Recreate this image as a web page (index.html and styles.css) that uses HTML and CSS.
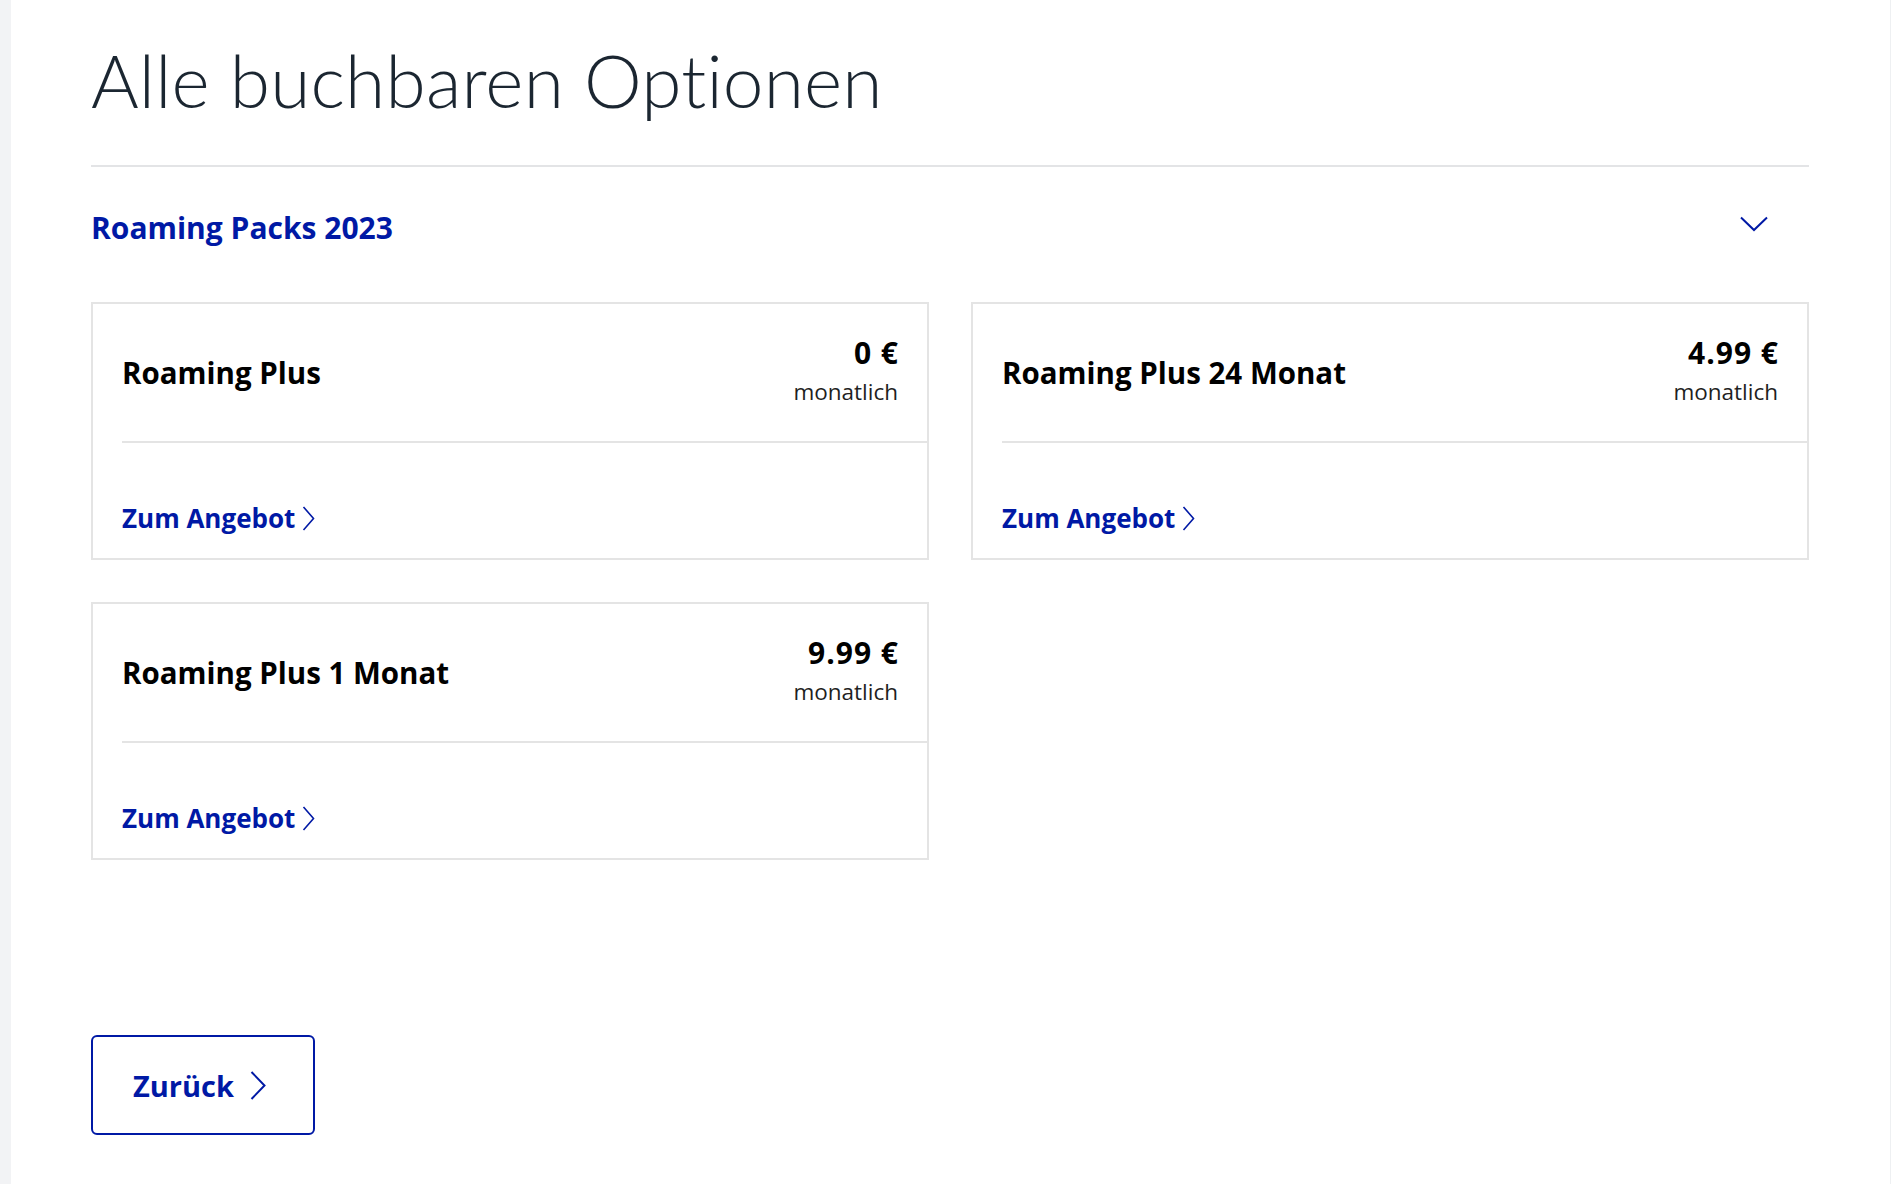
FILE: index.html
```html
<!DOCTYPE html>
<html lang="de">
<head>
<meta charset="utf-8">
<title>Alle buchbaren Optionen</title>
<link rel="stylesheet" href="styles.css">
</head>
<body>
<main class="page">
  <header class="page-head">
    <h1 class="page-title">Alle buchbaren Optionen</h1>
  </header>

  <section class="group">
    <div class="group-head">
      <h2 class="group-title">Roaming Packs 2023</h2>
      <svg class="group-toggle" width="28" height="16" viewBox="0 0 28 16" aria-hidden="true">
        <path d="M1 1.5 L14 14 L27 1.5" fill="none" stroke="#0019a5" stroke-width="2"/>
      </svg>
    </div>

    <div class="cards">
      <article class="card">
        <div class="card-head">
          <h3 class="card-name">Roaming Plus</h3>
          <div class="card-price">
            <div class="price">0 €</div>
            <div class="period">monatlich</div>
          </div>
        </div>
        <div class="card-foot">
          <a class="offer-link" href="#">Zum Angebot
            <svg class="link-chev" width="13" height="25" viewBox="0 0 13 25" aria-hidden="true"><path d="M1.5 1 L11.5 12.5 L1.5 24" fill="none" stroke="#0019a5" stroke-width="1.6"/></svg>
          </a>
        </div>
      </article>

      <article class="card">
        <div class="card-head">
          <h3 class="card-name">Roaming Plus 24 Monat</h3>
          <div class="card-price">
            <div class="price">4.99 €</div>
            <div class="period">monatlich</div>
          </div>
        </div>
        <div class="card-foot">
          <a class="offer-link" href="#">Zum Angebot
            <svg class="link-chev" width="13" height="25" viewBox="0 0 13 25" aria-hidden="true"><path d="M1.5 1 L11.5 12.5 L1.5 24" fill="none" stroke="#0019a5" stroke-width="1.6"/></svg>
          </a>
        </div>
      </article>

      <article class="card">
        <div class="card-head">
          <h3 class="card-name">Roaming Plus 1 Monat</h3>
          <div class="card-price">
            <div class="price">9.99 €</div>
            <div class="period">monatlich</div>
          </div>
        </div>
        <div class="card-foot">
          <a class="offer-link" href="#">Zum Angebot
            <svg class="link-chev" width="13" height="25" viewBox="0 0 13 25" aria-hidden="true"><path d="M1.5 1 L11.5 12.5 L1.5 24" fill="none" stroke="#0019a5" stroke-width="1.6"/></svg>
          </a>
        </div>
      </article>
    </div>
  </section>

  <button class="back-btn" type="button">
    <span>Zurück</span>
    <svg class="back-chev" width="16" height="29" viewBox="0 0 16 29" aria-hidden="true"><path d="M1.5 1 L14.5 14.5 L1.5 28" fill="none" stroke="#0019a5" stroke-width="2"/></svg>
  </button>
</main>
</body>
</html>
```
FILE: styles.css
```css
* { box-sizing: border-box; }

html, body {
  margin: 0;
  padding: 0;
}

body {
  background: #f2f3f5;
  font-family: "Open Sans", "Noto Sans", Lato, sans-serif;
  color: #000;
}

.page {
  margin-left: 11px;
  min-height: 1184px;
  background: #fff;
  border-right: 1px solid #eef0f2;
  padding: 0 81px 0 80px;
}

.page-head {
  padding-top: 44px;
  padding-bottom: 49px;
  border-bottom: 2px solid #e3e4e6;
}

.page-title {
  margin: 0;
  font-family: Lato, "Open Sans", sans-serif;
  font-variant-ligatures: none;
  font-size: 73px;
  line-height: 72px;
  font-weight: 300;
  color: #1b2631;
  letter-spacing: 0.2px;
}

.group-head {
  height: 122px;
  margin-bottom: 13px;
  display: flex;
  align-items: center;
  justify-content: space-between;
  padding-right: 41px;
}

.group-title {
  margin: 0;
  font-size: 30px;
  line-height: 36px;
  font-weight: 700;
  color: #0019a5;
}

.group-toggle {
  display: block;
  margin-bottom: 8px;
}

.cards {
  display: grid;
  grid-template-columns: 1fr 1fr;
  column-gap: 42px;
  row-gap: 42px;
}

.card {
  border: 2px solid #e4e4e4;
  height: 258px;
  background: #fff;
}

.card-head {
  margin-left: 29px;
  padding-right: 29px;
  height: 139px;
  border-bottom: 2px solid #e4e4e4;
  display: flex;
  justify-content: space-between;
  align-items: flex-start;
}

.card-name {
  margin: 0;
  align-self: center;
  font-size: 29.5px;
  line-height: 36px;
  font-weight: 700;
  color: #000;
}

.card-price {
  padding-top: 31px;
  text-align: right;
}

.price {
  font-size: 30px;
  line-height: 36px;
  font-weight: 700;
  letter-spacing: 1px;
  margin-right: -1px;
  color: #000;
}

.period {
  margin-top: 6px;
  font-size: 22.5px;
  line-height: 30px;
  font-weight: 400;
  color: #1f1f1f;
}

.card-foot {
  height: 115px;
  margin-left: 29px;
  padding-top: 59px;
}

.offer-link {
  display: inline-flex;
  align-items: center;
  gap: 7px;
  font-size: 26px;
  line-height: 32px;
  font-weight: 700;
  color: #0019a5;
  text-decoration: none;
}

.link-chev { display: block; }

.back-btn {
  margin-top: 175px;
  width: 224px;
  height: 100px;
  border: 2px solid #0019a5;
  border-radius: 6px;
  background: #fff;
  display: flex;
  align-items: center;
  padding: 0 0 0 40px;
  gap: 16px;
  font-family: inherit;
  font-size: 29px;
  font-weight: 700;
  color: #0019a5;
  cursor: pointer;
}

.back-chev { display: block; }
```
